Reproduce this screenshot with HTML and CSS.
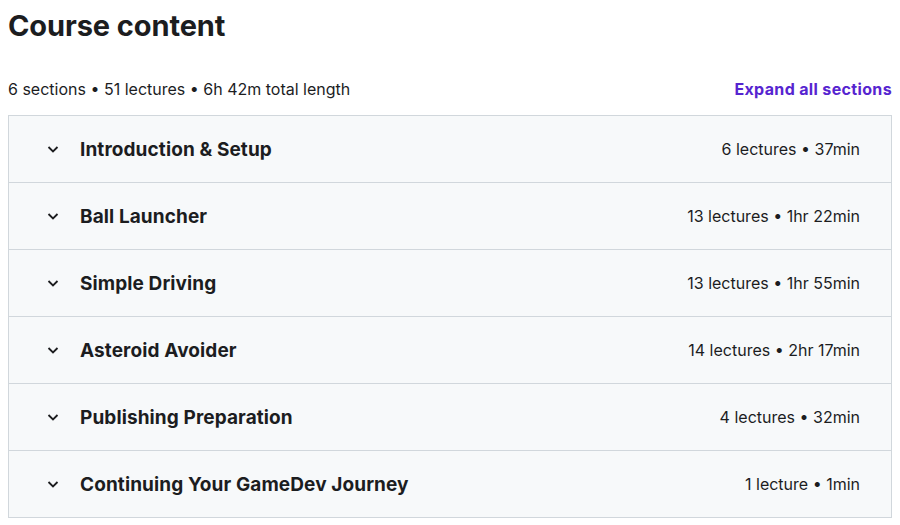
FILE: index.html
```html
<!DOCTYPE html>
<html lang="en">
<head>
    <meta charset="UTF-8">
    <meta name="viewport" content="width=device-width, initial-scale=1.0">
    <title>Course content</title>
    <link rel="stylesheet" href="styles.css">
</head>
<body>
    <div class="course-content">
        <h2 class="title">Course content</h2>

        <div class="summary">
            <span class="summary-text">6 sections • 51 lectures • 6h 42m total length</span>
            <button class="expand-all">Expand all sections</button>
        </div>

        <!-- Sections -->
        <div class="sections">
            <div class="section">
                <span class="chevron"><svg width="14" height="14" viewBox="0 0 14 14"><path d="M2.5 5l4.5 4.5 4.5-4.5" fill="none" stroke="#1c1d1f" stroke-width="1.8"/></svg></span>
                <span class="section-title">Introduction &amp; Setup</span>
                <span class="section-meta">6 lectures • 37min</span>
            </div>
            <div class="section">
                <span class="chevron"><svg width="14" height="14" viewBox="0 0 14 14"><path d="M2.5 5l4.5 4.5 4.5-4.5" fill="none" stroke="#1c1d1f" stroke-width="1.8"/></svg></span>
                <span class="section-title">Ball Launcher</span>
                <span class="section-meta">13 lectures • 1hr 22min</span>
            </div>
            <div class="section">
                <span class="chevron"><svg width="14" height="14" viewBox="0 0 14 14"><path d="M2.5 5l4.5 4.5 4.5-4.5" fill="none" stroke="#1c1d1f" stroke-width="1.8"/></svg></span>
                <span class="section-title">Simple Driving</span>
                <span class="section-meta">13 lectures • 1hr 55min</span>
            </div>
            <div class="section">
                <span class="chevron"><svg width="14" height="14" viewBox="0 0 14 14"><path d="M2.5 5l4.5 4.5 4.5-4.5" fill="none" stroke="#1c1d1f" stroke-width="1.8"/></svg></span>
                <span class="section-title">Asteroid Avoider</span>
                <span class="section-meta">14 lectures • 2hr 17min</span>
            </div>
            <div class="section">
                <span class="chevron"><svg width="14" height="14" viewBox="0 0 14 14"><path d="M2.5 5l4.5 4.5 4.5-4.5" fill="none" stroke="#1c1d1f" stroke-width="1.8"/></svg></span>
                <span class="section-title">Publishing Preparation</span>
                <span class="section-meta">4 lectures • 32min</span>
            </div>
            <div class="section">
                <span class="chevron"><svg width="14" height="14" viewBox="0 0 14 14"><path d="M2.5 5l4.5 4.5 4.5-4.5" fill="none" stroke="#1c1d1f" stroke-width="1.8"/></svg></span>
                <span class="section-title">Continuing Your GameDev Journey</span>
                <span class="section-meta">1 lecture • 1min</span>
            </div>
        </div>
    </div>
</body>
</html>
```

FILE: styles.css
```css
body {
    font-family: 'Inter', 'Liberation Sans', sans-serif;
    margin: 0;
    padding: 0 8px;
    background-color: #fff;
    color: #1c1d1f;
}

.title {
    font-size: 29px;
    font-weight: 700;
    margin: 0;
    padding-top: 8px;
    line-height: 36px;
    letter-spacing: -0.1px;
}

.summary {
    display: flex;
    justify-content: space-between;
    align-items: center;
    margin-top: 33px;
    height: 24px;
    margin-bottom: 14px;
}

.summary-text {
    font-size: 16px;
}

.expand-all {
    background: none;
    border: none;
    padding: 0;
    font-family: inherit;
    font-size: 16px;
    font-weight: 700;
    letter-spacing: 0.35px;
    color: #5624d0;
    cursor: pointer;
}

.sections {
    border: 1px solid #d1d7dc;
    border-bottom: none;
}

.section {
    display: flex;
    align-items: center;
    height: 66px;
    padding: 0 31px 0 37px;
    background-color: #f7f9fa;
    border-bottom: 1px solid #d1d7dc;
}

.chevron {
    display: flex;
    width: 14px;
    height: 14px;
    margin-right: 20px;
}

.section-title {
    flex: 1;
    font-size: 19px;
    font-weight: 700;
    letter-spacing: 0.1px;
}

.section-meta {
    font-size: 16px;
}
```
